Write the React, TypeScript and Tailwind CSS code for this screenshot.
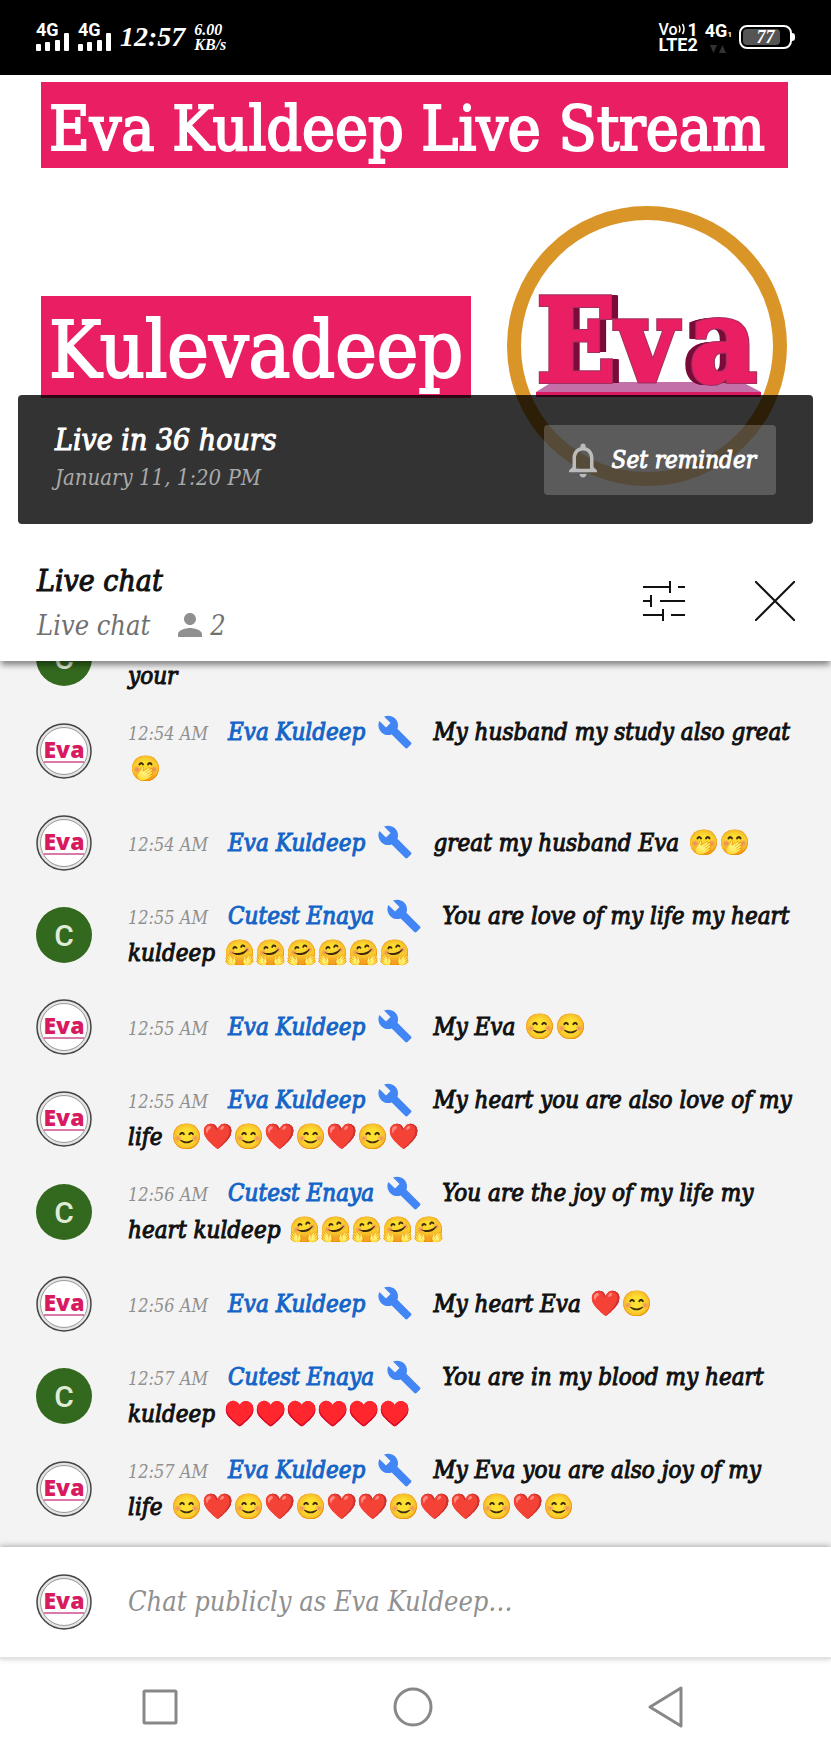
import React from 'react';
import { MdBuild, MdNotificationsNone, MdPerson } from 'react-icons/md';

type Author = 'eva' | 'enaya';

interface ChatMessage {
  time: string;
  author: Author;
  text: string;
  emojis: string[];
}

const NAMES: Record<Author, string> = {
  eva: 'Eva Kuldeep',
  enaya: 'Cutest Enaya',
};

const repeat = (emoji: string, count: number) => Array<string>(count).fill(emoji);

const MESSAGES: ChatMessage[] = [
  { time: '12:54 AM', author: 'eva', text: 'My husband my study also great ', emojis: ['🤭'] },
  { time: '12:54 AM', author: 'eva', text: 'great my husband Eva ', emojis: repeat('🤭', 2) },
  { time: '12:55 AM', author: 'enaya', text: 'You are love of my life my heart kuldeep ', emojis: repeat('🤗', 6) },
  { time: '12:55 AM', author: 'eva', text: 'My Eva ', emojis: repeat('😊', 2) },
  {
    time: '12:55 AM',
    author: 'eva',
    text: 'My heart you are also love of my life\u00a0',
    emojis: ['😊', '❤️', '😊', '❤️', '😊', '❤️', '😊', '❤️'],
  },
  { time: '12:56 AM', author: 'enaya', text: 'You are the joy of my life my heart kuldeep ', emojis: repeat('🤗', 5) },
  { time: '12:56 AM', author: 'eva', text: 'My heart Eva ', emojis: ['❤️', '😊'] },
  { time: '12:57 AM', author: 'enaya', text: 'You are in my blood my heart kuldeep ', emojis: repeat('♥️', 6) },
  {
    time: '12:57 AM',
    author: 'eva',
    text: 'My Eva you are also joy of my life\u00a0',
    emojis: ['😊', '❤️', '😊', '❤️', '😊', '❤️', '❤️', '😊', '❤️', '❤️', '😊', '❤️', '😊'],
  },
];

function Signal() {
  return (
    <div className="flex w-[33px] flex-col font-['Roboto'] text-lg leading-[14px] font-bold not-italic">
      <span>4G</span>
      <svg className="-mt-1 h-[18px] w-[33px]" viewBox="0 0 33 18" fill="currentColor">
        <rect x="0" y="11" width="5" height="7" rx="1" />
        <rect x="9" y="9" width="5" height="9" rx="1" />
        <rect x="19" y="7" width="5" height="11" rx="1" />
        <rect x="28" y="0" width="5" height="18" rx="1" />
      </svg>
    </div>
  );
}

function StatusBar() {
  return (
    <header className="flex h-[75px] shrink-0 items-center justify-between bg-black px-9 pb-0.5 text-white">
      <div className="flex items-center gap-[9px] font-['Liberation_Serif'] font-bold">
        <Signal />
        <Signal />
        <span className="text-[28px] leading-9">12:57</span>
        <span className="text-base leading-[15px]">
          6.00
          <br />
          KB/s
        </span>
      </div>
      <div className="flex items-center gap-[7px] font-['Roboto'] font-bold not-italic">
        <div className="text-lg leading-[15px]">
          <div className="flex items-center justify-between">
            <span className="text-base leading-[15px] font-medium">Vo</span>
            <svg className="h-3 w-2" viewBox="0 0 8 12" fill="none" stroke="currentColor" strokeWidth="1.5">
              <path d="M1 2.5q2 3.500 0 7M4.500 1q3 5 0 10" />
            </svg>
            <span>1</span>
          </div>
          <div>LTE2</div>
        </div>
        <div className="flex flex-col items-center">
          <div className="text-lg leading-5">
            4G<span className="text-[8px]">1</span>
          </div>
          <svg className="h-2 w-4" viewBox="0 0 16 8" fill="#333">
            <path d="M0 0h7L3.500 8zM9 8h7L12.500 0z" />
          </svg>
        </div>
        <div className="flex items-center">
          <div className="relative flex h-6 w-[53px] items-center justify-center rounded-lg border-2 border-white font-['Liberation_Serif'] text-lg italic">
            <span className="absolute inset-y-0.5 left-0.5 w-[37px] rounded-sm bg-[#555]" />
            <span className="relative">77</span>
          </div>
          <span className="h-2 w-[3px] rounded-r bg-white" />
        </div>
      </div>
    </header>
  );
}

/** Channel artwork: gold ring with the extruded word mark standing on a shelf */
function ChannelLogo() {
  return (
    <svg className="h-[282px] w-[282px] shrink-0" viewBox="0 0 282 282">
      <circle cx="141" cy="141" r="133" fill="#fff" stroke="#d99527" strokeWidth="14" />
      <path d="M46 177h190l19 10H30z" fill="#c470a8" />
      <path d="M30 187h225v5H30z" fill="#d81b60" />
      <g
        fontFamily="DejaVu Serif Condensed, DejaVu Serif"
        fontStretch="condensed"
        fontSize="114"
        fontWeight="bold"
        strokeWidth="4"
      >
        {[7, 6, 5, 4, 3, 2, 1].map((d) => (
          <text key={d} x={`${31 + d} 111 ${184 - d}`} y={176} fill="#7a0c3a" stroke="#7a0c3a">
            Eva
          </text>
        ))}
        <text x="31 111 184" y="176" fill="#e91e63" stroke="#a03060" strokeWidth="6">
          Eva
        </text>
        <text x="31 111 184" y="176" fill="#e91e63" stroke="#e91e63">
          Eva
        </text>
      </g>
    </svg>
  );
}

function StreamBanner() {
  return (
    <section className="relative h-[453px] shrink-0 bg-white pt-[7px] pr-[43px] pl-[41px] text-white">
      <h1 className="h-[86px] bg-[#e91e63] px-2 text-[62px] leading-[94px] whitespace-nowrap not-italic [-webkit-text-stroke:2px]">
        Eva Kuldeep Live Stream
      </h1>
      <div className="flex justify-between pt-[37px] not-italic">
        <h2 className="mt-[91px] h-[102px] bg-[#e91e63] px-2 text-[78px] leading-[108px] [-webkit-text-stroke:2px]">
          Kulevadeep
        </h2>
        <ChannelLogo />
      </div>

      <div className="absolute inset-x-[18px] bottom-1 flex h-[129px] items-center justify-between rounded bg-black/80 pr-[37px] pl-[37px]">
        <div>
          <div className="text-[30px] leading-9 [-webkit-text-stroke:1px]">Live in 36 hours</div>
          <div className="text-[22px] leading-10 text-[#aaa]">January 11, 1:20 PM</div>
        </div>
        <button className="flex h-[70px] items-center gap-2 rounded bg-white/20 pr-5 pl-[18px] text-2xl [-webkit-text-stroke:1px]">
          <MdNotificationsNone className="h-[42px] w-[42px] text-[#bbb]" />
          Set reminder
        </button>
      </div>
    </section>
  );
}

function ChatHeader() {
  return (
    <div className="relative z-10 flex h-[133px] shrink-0 items-center justify-between bg-white pt-3 pr-9 pl-[37px] shadow-[0_5px_6px_-1px_rgba(0,0,0,0.45)]">
      <div className="pt-1">
        <h3 className="text-[30px] leading-[45px] text-[#111] [-webkit-text-stroke:1px]">Live chat</h3>
        <div className="flex items-center text-[27px] leading-[45px] text-[#707070]">
          Live chat
          <MdPerson className="mr-0.5 ml-[22px] h-9 w-9 text-[#909090]" />2
        </div>
      </div>
      <div className="flex items-center gap-[70px] text-[#111]">
        <button aria-label="Chat settings">
          <svg className="h-10 w-[42px]" viewBox="0 0 42 40" fill="none" stroke="currentColor" strokeWidth="2">
            <path d="M0 6h27M35 6h7M27 0v12M0 20h8M17 20h25M8 14v12M0 34h20M28 34h14M20 28v12" />
          </svg>
        </button>
        <button aria-label="Close chat">
          <svg className="h-10 w-10" viewBox="0 0 40 40" stroke="currentColor" strokeWidth="2">
            <path d="M0 0l40 40M40 0L0 40" />
          </svg>
        </button>
      </div>
    </div>
  );
}

function Avatar({ author }: { author: Author }) {
  if (author === 'enaya') {
    return (
      <div className="flex h-14 w-14 shrink-0 items-center justify-center rounded-full bg-[#33691e] font-['Roboto'] text-[30px] font-medium text-[#e0ecd8] not-italic">
        C
      </div>
    );
  }
  return (
    <svg className="h-14 w-14 shrink-0 not-italic" viewBox="0 0 56 56">
      <circle cx="28" cy="28" r="27" fill="#e4e4e4" stroke="#444" strokeWidth="1.500" />
      <circle cx="28" cy="28" r="23.500" fill="#fff" stroke="#999" strokeWidth="1" />
      <text x="28" y="35" textAnchor="middle" fontFamily="Noto Sans" fontSize="23" fontWeight="900" fill="#d81b60">
        Eva
      </text>
      <path d="M8 39h40" stroke="#d97aa8" strokeWidth="2" />
    </svg>
  );
}

function MessageRow({ message }: { message: ChatMessage }) {
  return (
    <li className="flex min-h-[91px] shrink-0 items-center gap-9 pt-[9px] pr-6 pb-2.5 pl-9">
      <Avatar author={message.author} />
      <p className="text-2xl leading-[37px] text-[#111] [-webkit-text-stroke:1px]">
        <span className="mr-5 text-lg leading-none text-[#909090] [-webkit-text-stroke:0px]">{message.time}</span>
        <span className="text-[#1565c8]">{NAMES[message.author]}</span>
        <MdBuild className="-mt-3 mr-5 -mb-2 ml-3 inline h-9 w-9 text-[#4285f4]" strokeWidth={0} />
        {message.text}
        <span className="ml-0.5 text-[25px] leading-none not-italic">{message.emojis.join('')}</span>
      </p>
    </li>
  );
}

export default function App() {
  return (
    <div className="flex h-screen flex-col bg-white font-['DejaVu_Serif_Condensed','DejaVu_Serif',serif] italic">
      <StatusBar />
      <StreamBanner />
      <ChatHeader />
      <ul className="flex min-h-0 flex-1 flex-col justify-end overflow-hidden bg-[#f3f3f3] pb-[11px]">
        {/* oldest message, scrolled half under the header */}
        <li className="flex shrink-0 items-center gap-9 pt-[9px] pr-6 pb-2.5 pl-9">
          <Avatar author="enaya" />
          <p className="pt-[37px] text-2xl leading-[37px] text-[#111] [-webkit-text-stroke:1px]">your</p>
        </li>
        {MESSAGES.map((message, i) => (
          <MessageRow key={i} message={message} />
        ))}
      </ul>
      <form className="relative flex h-[112px] shrink-0 items-center gap-9 border-b-2 border-[#e4e4e4] bg-white px-9 shadow-[0_-1px_6px_rgba(0,0,0,0.3)]">
        <Avatar author="eva" />
        <input
          aria-label="Chat message"
          placeholder="Chat publicly as Eva Kuldeep…"
          className="min-w-0 flex-1 text-[27px] italic outline-none placeholder:text-[#909090]"
        />
      </form>
      <nav className="flex h-24 shrink-0 items-center justify-between pr-[146px] pl-[142px] text-[#888]">
        <button aria-label="Recent apps">
          <svg className="h-[42px] w-9" viewBox="0 0 36 42" fill="none" stroke="currentColor" strokeWidth="3">
            <rect x="2" y="5" width="32" height="32" rx="1" />
          </svg>
        </button>
        <button aria-label="Home">
          <svg className="h-[42px] w-[42px]" viewBox="0 0 42 42" fill="none" stroke="currentColor" strokeWidth="3">
            <circle cx="21" cy="21" r="18" />
          </svg>
        </button>
        <button aria-label="Back">
          <svg
            className="h-[42px] w-[38px]"
            viewBox="0 0 38 42"
            fill="none"
            stroke="currentColor"
            strokeWidth="3"
            strokeLinejoin="round"
          >
            <path d="M34 2v38L3 21z" />
          </svg>
        </button>
      </nav>
    </div>
  );
}
